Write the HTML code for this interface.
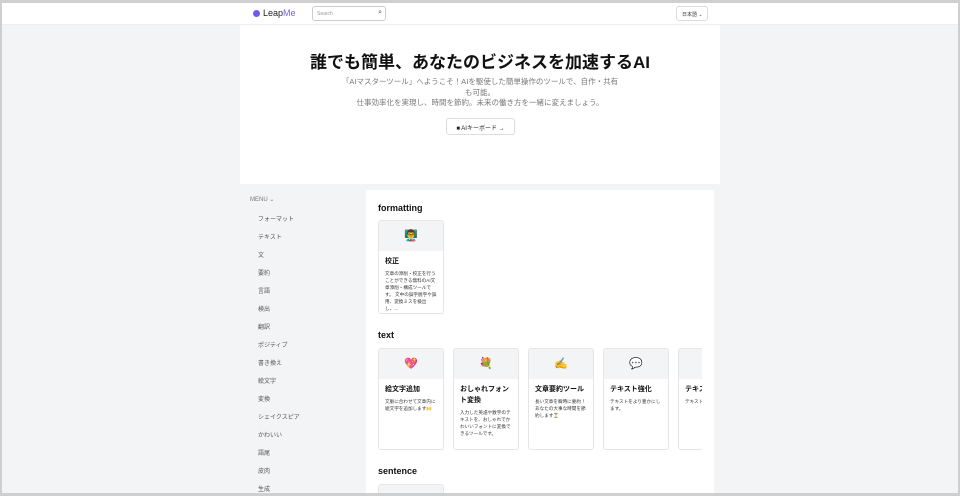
<!DOCTYPE html>
<html><head><meta charset="utf-8"><style>
*{margin:0;padding:0;box-sizing:border-box}
body{width:960px;height:496px;overflow:hidden;background:#f3f4f6;font-family:"Liberation Sans","Noto Sans CJK JP",sans-serif;position:relative;color:#111}
.frame{position:absolute;left:0;top:0;width:960px;height:496px;border:3px solid #cfcfcf;border-left-width:2px;border-right-width:2px;pointer-events:none;z-index:10}
.hdr{position:absolute;left:0;top:3px;width:960px;height:22px;background:#fff;border-bottom:1px solid #eee}
.logo{position:absolute;left:253px;top:8px;font-size:9px;color:#222;display:flex;align-items:center}
.logo i{width:7px;height:7px;border-radius:50%;background:#6d5cf0;display:inline-block;margin-right:3px}
.logo span{color:#7a5cf0}
.search{position:absolute;left:312px;top:6px;width:74px;height:15px;border:1px solid #ccc;border-radius:3px;font-size:5px;color:#999;padding:4px 0 0 4px}
.lang{position:absolute;left:676px;top:6px;width:32px;height:15px;border:1px solid #ddd;border-radius:3px;font-size:5px;color:#333;padding:4px 0 0 5px}
.hero{position:absolute;left:240px;top:25px;width:480px;height:159px;background:#fff;text-align:center}
.hero h1{font-size:17px;font-weight:bold;margin-top:23px;letter-spacing:0}
.hero p{font-size:7.5px;color:#777;line-height:10.5px;width:282px;margin:4px auto 0}
.btn{position:absolute;left:206px;top:93px;width:69px;height:17px;border:1px solid #ddd;border-radius:3px;font-size:6px;padding-top:4px;color:#222}
.side{position:absolute;left:250px;top:196px;font-size:6px;color:#555;height:297px;overflow:hidden}
.side div{height:18px}
.side .m{color:#777;padding-left:0}
.side .it{padding-left:8px}
.panel{position:absolute;left:366px;top:190px;width:348px;height:303px;background:#fff;overflow:hidden}
h2{position:absolute;left:12px;font-size:9px;font-weight:bold}
.card{position:absolute;width:66px;height:94px;border:1px solid #e5e5e5;border-radius:3px;background:#fff;overflow:hidden}
.card .im{height:30px;background:#f3f4f6;text-align:center;font-size:11px;line-height:30px}
.card b{display:block;font-size:7px;margin:5px 6px 3px;line-height:11px}
.card p{font-size:4.6px;line-height:7px;margin:0 6px;color:#333}
.clip{position:absolute;left:0;top:0;width:336px;height:303px;overflow:hidden}
</style></head><body>
<div class="frame"></div>
<div class="hdr"></div>
<div class="logo"><i></i>Leap<span>Me</span></div>
<div class="search">Search<span style="position:absolute;right:3px;top:2px;font-size:7px;color:#444">⌕</span></div>
<div class="lang">日本語 ⌄</div>
<div class="hero">
<h1>誰でも簡単、あなたのビジネスを加速するAI</h1>
<p>「AIマスターツール」へようこそ！AIを駆使した簡単操作のツールで、自作・共有も可能。<br>仕事効率化を実現し、時間を節約。未来の働き方を一緒に変えましょう。</p>
<div class="btn">■ AIキーボード →</div>
</div>
<div class="side">
<div class="m">MENU ⌄</div>
<div class="it">フォーマット</div><div class="it">テキスト</div><div class="it">文</div><div class="it">要約</div><div class="it">言語</div><div class="it">検出</div><div class="it">翻訳</div><div class="it">ポジティブ</div><div class="it">書き換え</div><div class="it">絵文字</div><div class="it">変換</div><div class="it">シェイクスピア</div><div class="it">かわいい</div><div class="it">語尾</div><div class="it">皮肉</div><div class="it">生成</div>
</div>
<div class="panel"><div class="clip">
<h2 style="top:13px">formatting</h2>
<div class="card" style="left:12px;top:30px"><div class="im">👨‍🏫</div><b>校正</b><p>文章の添削・校正を行うことができる無料のAI文章添削・構成ツールです。 文中の誤字脱字や誤用、変換ミスを検出し、...</p></div>
<h2 style="top:140px">text</h2>
<div class="card" style="left:12px;top:158px;height:102px"><div class="im">💖</div><b>絵文字追加</b><p>文脈に合わせて文章内に絵文字を追加します🙌</p></div>
<div class="card" style="left:87px;top:158px;height:102px"><div class="im">💐</div><b>おしゃれフォント変換</b><p>入力した英語や数字のテキストを、おしゃれでかわいいフォントに変換できるツールです。</p></div>
<div class="card" style="left:162px;top:158px;height:102px"><div class="im">✍️</div><b>文章要約ツール</b><p>長い文章を瞬時に要約！あなたの大事な時間を節約します⏳</p></div>
<div class="card" style="left:237px;top:158px;height:102px"><div class="im">💬</div><b>テキスト強化</b><p>テキストをより豊かにします。</p></div>
<div class="card" style="left:312px;top:158px;height:102px"><div class="im">📝</div><b>テキスト</b><p>テキスト</p></div>
<h2 style="top:276px">sentence</h2>
<div class="card" style="left:12px;top:294px"><div class="im"></div></div>
</div></div>
</body></html>
